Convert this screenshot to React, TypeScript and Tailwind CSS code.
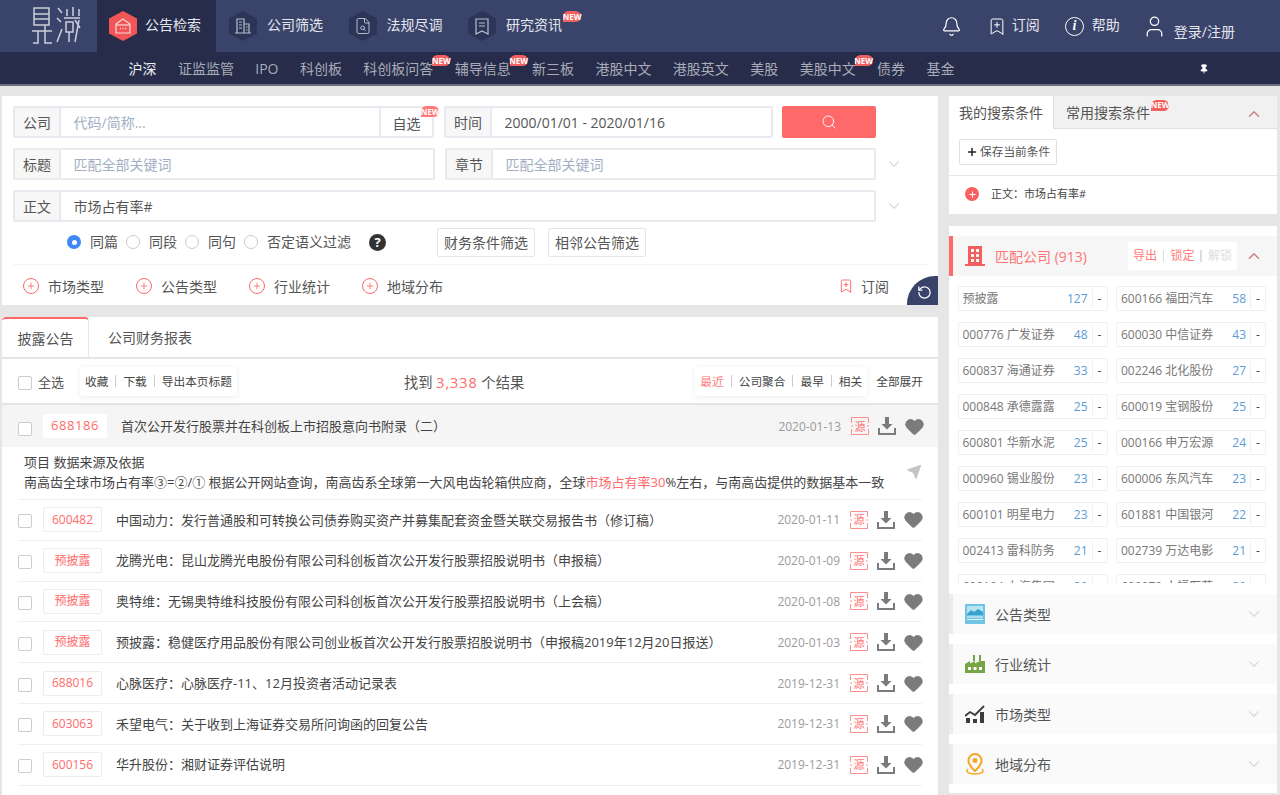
import { Bell, BookmarkPlus, ChevronDown, ChevronUp, FileSearch, Heart, Pin, Plus, RotateCcw, Search, Send, User } from "lucide-react";
import type { ReactNode } from "react";

function BasketIcon() {
  return (
    <svg viewBox="0 0 18 18" className="relative h-[18px] w-[18px]" fill="none" stroke="#f9dada" strokeWidth="1.2">
      <path d="M2 7l7-5 7 5v9H2z" />
      <path d="M2 8h14" />
      <path d="M6 11.500h1M8.500 11.500h1M11 11.500h1" strokeWidth="1.500" />
    </svg>
  );
}

function BuildingIcon() {
  return (
    <svg viewBox="0 0 18 18" className="relative h-[18px] w-[18px]" fill="none" stroke="#b9bdca" strokeWidth="1.2">
      <path d="M3 16V2h7v14M10 7h5v9M1 16h16" />
      <path d="M5 5h3M5 8h3M5 11h3M12 10h1.500M12 13h1.500" />
    </svg>
  );
}

function DocSearchIcon() {
  return <FileSearch className="relative h-[18px] w-[18px] text-[#b9bdca]" strokeWidth={1.3} />;
}

function RibbonIcon() {
  return (
    <svg viewBox="0 0 18 18" className="relative h-[18px] w-[18px]" fill="none" stroke="#b9bdca" strokeWidth="1.2">
      <path d="M3 2h12v15l-6-3-6 3z" />
      <path d="M6 6h6M6 9h6" />
    </svg>
  );
}

const mainNav: { label: string; icon: ReactNode; isNew?: boolean }[] = [
  { label: "公司筛选", icon: <BuildingIcon /> },
  { label: "法规尽调", icon: <DocSearchIcon /> },
  { label: "研究资讯", icon: <RibbonIcon />, isNew: true },
];

const subNav = [
  { label: "沪深", active: true },
  { label: "证监监管" },
  { label: "IPO" },
  { label: "科创板" },
  { label: "科创板问答", isNew: true },
  { label: "辅导信息", isNew: true },
  { label: "新三板" },
  { label: "港股中文" },
  { label: "港股英文" },
  { label: "美股" },
  { label: "美股中文", isNew: true },
  { label: "债券" },
  { label: "基金" },
];

const rows = [
  { code: "600482", title: "中国动力：发行普通股和可转换公司债券购买资产并募集配套资金暨关联交易报告书（修订稿）", date: "2020-01-11" },
  { code: "预披露", title: "龙腾光电：昆山龙腾光电股份有限公司科创板首次公开发行股票招股说明书（申报稿）", date: "2020-01-09" },
  { code: "预披露", title: "奥特维：无锡奥特维科技股份有限公司科创板首次公开发行股票招股说明书（上会稿）", date: "2020-01-08" },
  { code: "预披露", title: "预披露：稳健医疗用品股份有限公司创业板首次公开发行股票招股说明书（申报稿2019年12月20日报送）", date: "2020-01-03" },
  { code: "688016", title: "心脉医疗：心脉医疗-11、12月投资者活动记录表", date: "2019-12-31" },
  { code: "603063", title: "禾望电气：关于收到上海证券交易所问询函的回复公告", date: "2019-12-31" },
  { code: "600156", title: "华升股份：湘财证券评估说明", date: "2019-12-31" },
];

const companies = [
  ["预披露", "127"], ["600166 福田汽车", "58"],
  ["000776 广发证券", "48"], ["600030 中信证券", "43"],
  ["600837 海通证券", "33"], ["002246 北化股份", "27"],
  ["000848 承德露露", "25"], ["600019 宝钢股份", "25"],
  ["600801 华新水泥", "25"], ["000166 申万宏源", "24"],
  ["000960 锡业股份", "23"], ["600006 东风汽车", "23"],
  ["600101 明星电力", "23"], ["601881 中国银河", "22"],
  ["002413 雷科防务", "21"], ["002739 万达电影", "21"],
  ["600104 上汽集团", "20"], ["600079 人福医药", "20"],
];

function NewBadge({ className }: { className: string }) {
  return (
    <span className={`absolute flex h-[11px] w-[18px] items-center justify-center rounded-full rounded-bl-none bg-[#f25f5f] text-[8px] font-bold leading-none text-white ${className}`}>
      NEW
    </span>
  );
}

function Hex({ children, active }: { children: ReactNode; active?: boolean }) {
  return (
    <span className="relative flex h-[30px] w-[28px] items-center justify-center">
      <svg viewBox="0 0 28 30" className="absolute inset-0 h-full w-full">
        <polygon points="14,0 28,7.5 28,22.5 14,30 0,22.5 0,7.5" fill={active ? "#f25555" : "#2c3557"} />
      </svg>
      {children}
    </span>
  );
}

function Logo() {
  return (
    <svg viewBox="0 0 50 40" className="h-[40px] w-[50px]" fill="none" stroke="#cdd0dc" strokeWidth="1.5">
      <path d="M3 2h15v17H3zM3 8h15M3 13h15M1 25h20M7 25v12H2M14 19v18h7" />
      <path d="M27 2l4 5M26 12l4 4M26 36l5-13M33 12h16M36 3v7M42 1v9M48 3v7M35 16h7v10h-7zM38 26v10M44 14l5 8M48 14l-4 22" />
    </svg>
  );
}

function Header() {
  return (
    <header className="flex h-[52px] items-stretch bg-[#3a4369] text-[14px] text-[#e4e6ee]">
      <div className="flex w-[97px] items-center justify-center pl-[14px]">
        <Logo />
      </div>
      <div className="flex w-[119px] items-center gap-[8px] bg-[#262c4a] pl-[12px]">
        <Hex active><BasketIcon /></Hex>
        <span className="-mt-[3px]">公告检索</span>
      </div>
      {mainNav.map((item) => (
        <div key={item.label} className="flex w-[119.5px] items-center gap-[10px] pl-[13px]">
          <Hex>{item.icon}</Hex>
          <span className="relative -mt-[3px]">
            {item.label}
            {item.isNew && <NewBadge className="-right-[19px] -top-[3px]" />}
          </span>
        </div>
      ))}
      <div className="ml-auto flex items-center pr-[45px]">
        <Bell className="mr-[25px] h-[21px] w-[21px] text-white" strokeWidth={1.4} />
        <BookmarkPlus className="h-[25px] w-[20px] text-white" strokeWidth={1.2} />
        <span className="-mt-[3px] ml-[5px]">订阅</span>
        <span className="ml-[25px] flex h-[19px] w-[19px] items-center justify-center rounded-full border-[1.5px] border-white font-['Liberation_Serif',serif] text-[14px] font-bold italic leading-none text-white">i</span>
        <span className="-mt-[3px] ml-[8px]">帮助</span>
        <User className="ml-[22px] h-[25px] w-[25px] text-white" strokeWidth={1.2} />
        <span className="ml-[7px] mt-[10px]">登录/注册</span>
      </div>
    </header>
  );
}

function SubNav() {
  return (
    <nav className="flex h-[34px] items-center gap-[21.4px] border-b-2 border-[#6b6f7d] bg-[#262c4a] pl-[128.500px] pt-[1px] text-[14px] text-[#a9acb8]">
      {subNav.map((item) => (
        <span key={item.label} className={`relative ${item.active ? "text-[#eceef3]" : ""}`}>
          {item.label}
          {item.isNew && <NewBadge className="-right-[17px] -top-[3px]" />}
        </span>
      ))}
      <Pin className="ml-[223px] h-[10px] w-[10px] fill-white text-white" />
    </nav>
  );
}

function Field({ label, value, placeholder, className, children }: { label: string; value?: string; placeholder?: string; className: string; children?: ReactNode }) {
  return (
    <div className={`flex h-[32px] items-stretch rounded-[2px] border-2 border-[#e8eaef] text-[14px] ${className}`}>
      <span className="flex w-[46px] shrink-0 items-center justify-center border-r-2 border-[#e8eaef] bg-[#f7f7f7] text-[#555]">{label}</span>
      <span className={`flex flex-1 items-center pl-[12.500px] ${value ? "text-[#555]" : "text-[#a3afc4]"}`}>{value ?? placeholder}</span>
      {children}
    </div>
  );
}

function Radio({ label, checked }: { label: string; checked?: boolean }) {
  return (
    <span className="flex items-center gap-[9px] text-[14px] text-[#555]">
      <span className={`flex h-[14px] w-[14px] items-center justify-center rounded-full ${checked ? "bg-[#3f88f5]" : "border border-[#ccc]"}`}>
        {checked && <span className="h-[5px] w-[5px] rounded-full bg-white" />}
      </span>
      <span className="-mt-[2px]">{label}</span>
    </span>
  );
}

function AddFilter({ label }: { label: string }) {
  return (
    <span className="flex w-[113px] items-center gap-[9px] text-[14px] text-[#555]">
      <span className="flex h-[16px] w-[16px] items-center justify-center rounded-full border-[1.5px] border-[#f96a6a]">
        <Plus className="h-[10px] w-[10px] text-[#f96a6a]" strokeWidth={2} />
      </span>
      {label}
    </span>
  );
}

function SearchPanel() {
  return (
    <section className="relative h-[209px] bg-white pl-[11px] pr-[10px] pt-[10px]">
      <div className="flex gap-[10px]">
        <Field label="公司" placeholder="代码/简称..." className="w-[421px]">
          <span className="relative flex w-[53px] items-center justify-center border-l-2 border-[#e8eaef] pt-[2px] text-[#555]">
            自选
            <NewBadge className="right-[-7px] top-[-2px] bg-[#ff7b7b]" />
          </span>
        </Field>
        <Field label="时间" value="2000/01/01 - 2020/01/16" className="w-[329px]" />
        <button className="-ml-[1px] flex h-[32px] w-[94px] items-center justify-center rounded-[2px] bg-[#ff6969]">
          <Search className="h-[16px] w-[16px] text-white" strokeWidth={1.4} />
        </button>
      </div>
      <div className="mt-[10px] flex items-center gap-[10px]">
        <Field label="标题" placeholder="匹配全部关键词" className="w-[422px]" />
        <Field label="章节" placeholder="匹配全部关键词" className="w-[431px]" />
        <ChevronDown className="-ml-[1px] h-[18px] w-[18px] text-[#e0d8d0]" strokeWidth={1.6} />
      </div>
      <div className="mt-[10px] flex items-center gap-[10px]">
        <Field label="正文" value="市场占有率#" className="w-[863px]" />
        <ChevronDown className="-ml-[1px] h-[18px] w-[18px] text-[#e0d8d0]" strokeWidth={1.6} />
      </div>
      <div className="flex h-[42px] items-center pb-[2px] pl-[54px]">
        <div className="flex items-center gap-[8px]">
          <Radio label="同篇" checked />
          <Radio label="同段" />
          <Radio label="同句" />
          <Radio label="否定语义过滤" />
        </div>
        <span className="ml-[18px] flex h-[17px] w-[17px] items-center justify-center rounded-full bg-[#333] text-[13px] font-bold leading-none text-white">?</span>
        <span className="ml-[51px] rounded-[2px] border border-[#e4e6ea] px-[6px] py-[3px] text-[14px] text-[#555]">财务条件筛选</span>
        <span className="ml-[13px] rounded-[2px] border border-[#e4e6ea] px-[6px] py-[3px] text-[14px] text-[#555]">相邻公告筛选</span>
      </div>
      <div className="flex h-[43px] items-center border-t border-[#f4f4f4] pl-[10px]">
        <AddFilter label="市场类型" />
        <AddFilter label="公告类型" />
        <AddFilter label="行业统计" />
        <AddFilter label="地域分布" />
        <span className="ml-[363px] flex items-center gap-[7px] text-[14px] text-[#555]">
          <BookmarkPlus className="h-[20px] w-[16px] text-[#ff7070]" strokeWidth={1.5} />
          订阅
        </span>
      </div>
      <span className="absolute bottom-0 right-0 flex h-[29px] w-[31px] items-center justify-center rounded-tl-[28px] bg-[#39436a] pl-[3px] pt-[3px]">
        <RotateCcw className="h-[15px] w-[15px] text-white" strokeWidth={2} />
      </span>
    </section>
  );
}

function Checkbox({ className = "" }: { className?: string }) {
  return <span className={`h-[14px] w-[14px] shrink-0 rounded-[2px] border border-[#ccc] bg-white ${className}`} />;
}

function ToolGroup({ items, active }: { items: string[]; active?: string }) {
  return (
    <span className="flex h-[29px] items-center rounded-[2px] bg-white px-[5px] text-[11.700px] text-[#444] shadow-[0_1px_6px_rgba(0,0,0,0.08)]">
      {items.map((t, i) => (
        <span key={t} className="flex items-center">
          {i > 0 && <span className="mx-[7px] h-[12px] w-px bg-[#ccc]" />}
          <span className={`pt-[2px] ${t === active ? "text-[#ff7b7b]" : ""}`}>{t}</span>
        </span>
      ))}
    </span>
  );
}

function DownloadIcon() {
  return (
    <svg viewBox="0 0 18 18" className="h-[18px] w-[18px]" fill="#7b7b7b">
      <path d="M7 0h4v7h3.5L9 12.5 3.500 7H7z" />
      <path d="M0 11h2v5h14v-5h2v7H0z" />
    </svg>
  );
}

function SourceMark() {
  return (
    <span className="relative ml-[10px] flex h-[18px] w-[18px] items-center justify-center text-[11px] leading-none text-[#ff7373]">
      <svg viewBox="0 0 18 18" className="absolute inset-0 h-full w-full" fill="none" stroke="#ff8f8f">
        <path d="M.5 6V.5h17V6M.5 12v5.500h17V12M0 9h2M16 9h2" />
      </svg>
      源
    </span>
  );
}

function RowActions({ date }: { date: string }) {
  return (
    <div className="-mr-[2px] ml-auto flex items-center">
      <span className="pt-[1px] text-[12px] text-[#9b9b9b]">{date}</span>
      <SourceMark />
      <span className="ml-[9px] flex"><DownloadIcon /></span>
      <Heart className="ml-[8px] h-[21px] w-[21px] fill-[#7b7b7b] text-[#7b7b7b]" strokeWidth={1} />
    </div>
  );
}

function ResultsPanel() {
  return (
    <section className="mt-[12px] flex-1 bg-white">
      <div className="flex h-[42px] border-b-2 border-[#e6e6e6] text-[14px] text-[#555]">
        <span className="flex w-[87px] items-center justify-center rounded-t-[4px] border-r border-t-2 border-[#e6e6e6] border-t-[#ff6969] bg-white pl-[1px]">披露公告</span>
        <span className="ml-[19px] flex items-center">公司财务报表</span>
      </div>
      <div className="flex h-[46px] items-center border-b-2 border-[#e3e3e3] pl-[16px] pr-[15px]">
        <Checkbox className="mt-[3px]" />
        <span className="ml-[6px] mt-[3px] text-[13px] text-[#555]">全选</span>
        <span className="ml-[16px]"><ToolGroup items={["收藏", "下载", "导出本页标题"]} /></span>
        <span className="ml-[167px] mt-[3px] text-[14.300px] text-[#555]">
          找到 <span className="tracking-[1px] text-[#ff6a6a]">3,338</span> 个结果
        </span>
        <span className="ml-auto"><ToolGroup items={["最近", "公司聚合", "最早", "相关"]} active="最近" /></span>
        <span className="ml-[9px] mt-[2px] text-[11.700px] text-[#444]">全部展开</span>
      </div>
      <div className="flex h-[42px] items-center bg-[#f5f5f5] pl-[16px] pr-[15px]">
        <Checkbox className="mt-[5px]" />
        <span className="ml-[11px] flex h-[24px] w-[64px] items-center justify-center rounded-[2px] bg-white text-[13px] tracking-[0.6px] text-[#ff6a6a]">688186</span>
        <span className="ml-[14px] mt-[2px] text-[13px] text-[#444]">首次公开发行股票并在科创板上市招股意向书附录（二）</span>
        <RowActions date="2020-01-13" />
      </div>
      <div className="relative mx-[16px] h-[53px] border-b border-[#f0f0f0] pl-[6px] pt-[5px] text-[13px] leading-[20px] text-[#444]">
        <p>项目 数据来源及依据</p>
        <p>
          南高齿全球市场占有率③=②/① 根据公开网站查询，南高齿系全球第一大风电齿轮箱供应商，全球
          <span className="text-[#ff6a6a]">市场占有率30</span>%左右，与南高齿提供的数据基本一致
        </p>
        <Send className="absolute right-0 top-[17px] h-[16px] w-[16px] fill-[#c4c4c4] text-[#c4c4c4]" strokeWidth={1} />
      </div>
      {rows.map((row) => (
        <div key={row.title} className="mx-[16px] flex h-[40.800px] items-center border-b border-[#f0f0f0]">
          <Checkbox className="mt-[3px]" />
          <span className="ml-[11px] flex h-[25px] w-[59px] items-center justify-center rounded-[2px] border border-[#ececec] text-[12px] text-[#ff6a6a]">{row.code}</span>
          <span className="ml-[14px] mt-[1px] text-[13px] text-[#444]">{row.title}</span>
          <RowActions date={row.date} />
        </div>
      ))}
    </section>
  );
}

function ConditionsPanel() {
  return (
    <section className="h-[118px] bg-white">
      <div className="flex h-[33px] items-stretch text-[14px] text-[#555]">
        <span className="flex w-[104px] items-center justify-center">我的搜索条件</span>
        <div className="flex flex-1 items-center justify-between border-b border-l border-[#dfdfdf] bg-[#f1f1f1] pl-[12px] pr-[14px]">
          <span className="relative">
            常用搜索条件
            <NewBadge className="-right-[19px] -top-[2px]" />
          </span>
          <ChevronUp className="mt-[3px] h-[18px] w-[18px] text-[#c97d7d]" strokeWidth={1.8} />
        </div>
      </div>
      <div className="flex h-[47px] items-center border-b border-[#e6e6e6] pl-[10px]">
        <span className="flex h-[26px] items-center gap-[2px] rounded-[2px] border border-[#e0e0e0] px-[6px] text-[11.700px] text-[#555]">
          <Plus className="h-[12px] w-[12px] text-[#222]" strokeWidth={3} />
          保存当前条件
        </span>
      </div>
      <div className="flex h-[36px] items-center pl-[16px] text-[11px] text-[#444]">
        <span className="flex h-[14px] w-[14px] items-center justify-center rounded-full bg-[#fa5f5f]">
          <Plus className="h-[9px] w-[9px] text-white" strokeWidth={3} />
        </span>
        <span className="ml-[12px]">正文：市场占有率#</span>
      </div>
    </section>
  );
}

function CompaniesPanel() {
  return (
    <section className="mt-[12px] flex-1 bg-white pt-[10px]">
      <div className="flex h-[40px] items-center border-l-4 border-[#ff6969] bg-[#f6f6f6] pl-[12px] pr-[14px]">
        <svg viewBox="0 0 20 20" className="h-[20px] w-[20px]" fill="#f25f5f">
          <path fillRule="evenodd" d="M3 0h14v18h3v2H0v-2h3zM6 3v3h3V3zM11 3v3h3V3zM6 8v3h3V8zM11 8v3h3V8zM6 13v3h3v-3zM11 13v3h3v-3z" />
        </svg>
        <span className="ml-[10px] text-[14px] text-[#ff7575]">匹配公司 (913)</span>
        <span className="ml-auto flex h-[28px] items-center rounded-[2px] bg-white px-[5px] text-[12px] text-[#ff7b7b]">
          导出<i className="mx-[6px] h-[12px] w-[1.500px] bg-[#ddd]" />锁定<i className="mx-[6px] h-[12px] w-[1.500px] bg-[#ddd]" /><span className="text-[#ddd]">解锁</span>
        </span>
        <ChevronUp className="ml-[8px] h-[18px] w-[18px] text-[#c97d7d]" strokeWidth={1.8} />
      </div>
      <div className="mt-[10px] h-[297px] overflow-hidden">
        <div className="grid grid-cols-[150px_150px] gap-x-[8.500px] gap-y-[11px] pl-[8.500px]">
          {companies.map(([name, count]) => (
            <div key={name} className="flex h-[25px] items-center rounded-[2px] border border-[#f0f0f0] pl-[4px] text-[12px] text-[#777]">
              <span className="flex-1 truncate">{name}</span>
              <span className="w-[26px] text-right text-[#5b9bd5]">{count}</span>
              <span className="ml-[4px] flex h-[19px] w-[15px] items-center justify-center border-l border-[#f0f0f0] text-[#444]">-</span>
            </div>
          ))}
        </div>
      </div>
      <CollapsedBar label="公告类型" className="mt-[11px]" icon={
        <svg viewBox="0 0 20 20" className="h-[20px] w-[20px]">
          <rect width="20" height="20" rx="1" fill="#6fc5e6" />
          <rect x="2" y="2" width="16" height="9" fill="#b8e3f3" />
          <path d="M2 10l4-4 3 2 4-3 5 3v3H2z" fill="#3aa3d3" />
          <path d="M2 13h16M2 15.500h16" stroke="#e7f6fb" strokeWidth="1" />
        </svg>
      } />
      <CollapsedBar label="行业统计" className="mt-[10px]" icon={
        <svg viewBox="0 0 20 20" className="h-[20px] w-[20px]" fill="#76a644">
          <path d="M0 10l5-3v2.500L10 7v2.500L15 7l5 0v12H0z" />
          <path d="M8 1h2v6H8zM14 1h2v6h-2z" />
          <path d="M3 13h3v3H3zM8.500 13h3v3h-3zM14 13h3v3h-3z" fill="#fff" />
        </svg>
      } />
      <CollapsedBar label="市场类型" className="mt-[10px]" icon={
        <svg viewBox="0 0 20 20" className="h-[20px] w-[20px]" fill="#3c3c3c">
          <path d="M0 12l5-4 5 3 9-9" fill="none" stroke="#3c3c3c" strokeWidth="1.800" />
          <path d="M1 14h4v5H1zM8 15h4v4H8zM15 8h4v11h-4z" />
        </svg>
      } />
      <CollapsedBar label="地域分布" className="mt-[10px]" icon={
        <svg viewBox="0 0 20 22" className="h-[22px] w-[20px]" fill="none">
          <path d="M10 1a6.500 6.500 0 0 0-6.500 6.500C3.500 12 10 18 10 18s6.500-6 6.500-10.500A6.500 6.500 0 0 0 10 1z" stroke="#f5a623" strokeWidth="2" />
          <circle cx="10" cy="7.500" r="2.500" fill="#f5a623" />
          <path d="M3 16c-3 3 1 5 7 5s10-2 7-5" stroke="#f5a623" strokeWidth="1.500" />
        </svg>
      } />
    </section>
  );
}

function CollapsedBar({ label, icon, className }: { label: string; icon: ReactNode; className: string }) {
  return (
    <div className={`flex h-[40px] items-center border-l-4 border-[#ececec] bg-[#fafafa] pl-[12px] pr-[14px] text-[14px] text-[#555] ${className}`}>
      <span className="flex w-[20px] justify-center">{icon}</span>
      <span className="ml-[10px]">{label}</span>
      <ChevronDown className="ml-auto h-[18px] w-[18px] text-[#e0d8d0]" strokeWidth={1.6} />
    </div>
  );
}

export default function App() {
  return (
    <div className="flex h-[795px] w-[1280px] flex-col overflow-hidden bg-[#e6e6e6] font-['Open_Sans','Noto_Sans_CJK_SC',sans-serif]">
      <Header />
      <SubNav />
      <main className="flex flex-1 gap-[11px] overflow-hidden pl-[2px] pr-[3px] pt-[10px]">
        <div className="flex w-[936px] flex-col">
          <SearchPanel />
          <ResultsPanel />
        </div>
        <div className="flex w-[328px] flex-col pb-[2px]">
          <ConditionsPanel />
          <CompaniesPanel />
        </div>
      </main>
    </div>
  );
}
